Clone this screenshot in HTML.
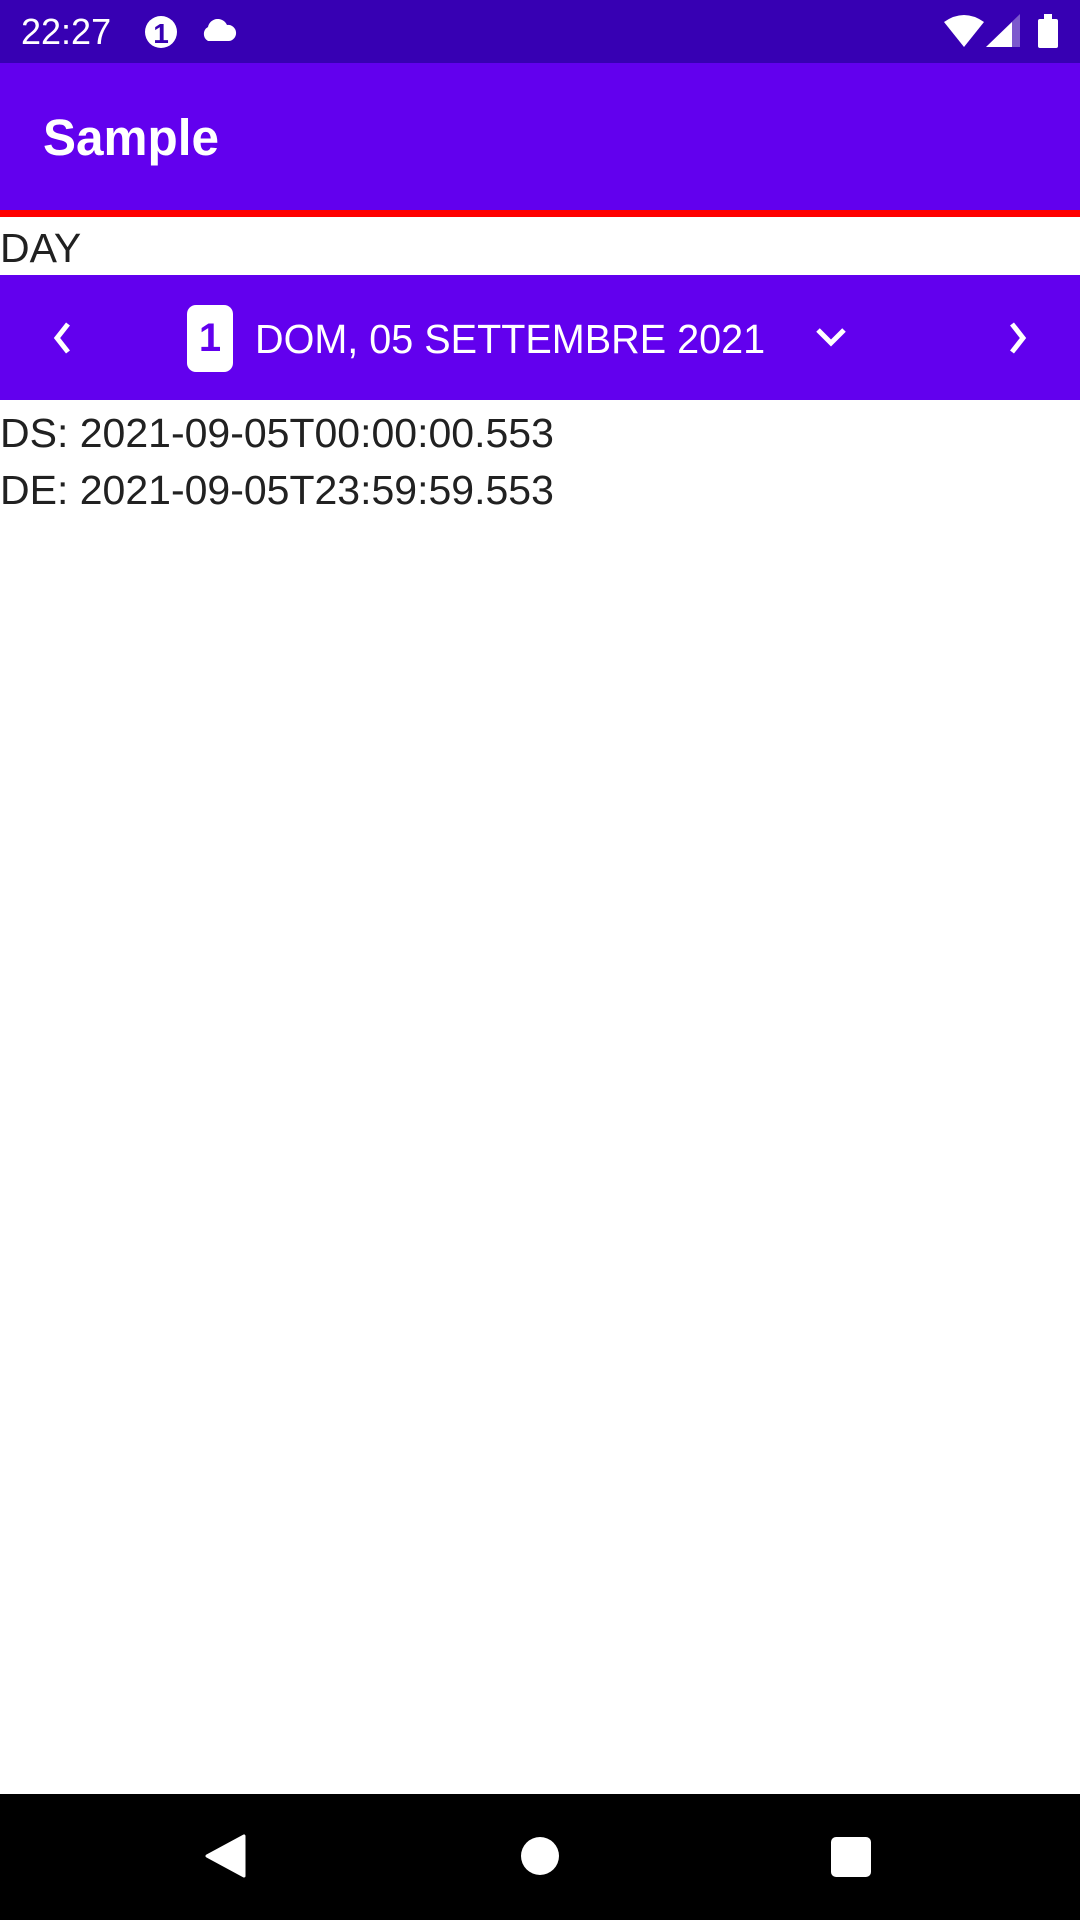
<!DOCTYPE html>
<html><head><meta charset="utf-8"><style>
*{margin:0;padding:0;box-sizing:border-box}
body{width:1080px;height:1920px;position:relative;background:#fff;font-family:"Liberation Sans",sans-serif;overflow:hidden}
.a{position:absolute}
</style></head><body>
<div class="a" style="left:0;top:0;width:1080px;height:63px;background:#3700B3"></div>
<div class="a" style="left:21px;top:10px;color:#fff;font-size:36px;line-height:44px;letter-spacing:0">22:27</div>
<svg class="a" style="left:144px;top:15px" width="34" height="34" viewBox="0 0 34 34"><circle cx="17" cy="17" r="16" fill="#fff"/><text x="17" y="28" text-anchor="middle" font-family="Liberation Sans" font-weight="bold" font-size="28" fill="#3700B3">1</text></svg>
<svg class="a" style="left:199px;top:19px" width="38" height="24" viewBox="0 0 38 24"><path d="M9 22 a8 8 0 0 1 0-14 a10 10 0 0 1 19-2 a8 8 0 0 1 2 16z" fill="#fff"/></svg>
<svg class="a" style="left:944px;top:14px" width="40" height="34" viewBox="0 0 40 34"><path d="M0 8 Q20 -6 40 8 L20 33Z" fill="#fff"/></svg>
<svg class="a" style="left:986px;top:14px" width="36" height="34" viewBox="0 0 36 34"><path d="M34 0 L34 33 L0 33Z" fill="#fff" opacity=".35"/><path d="M26 8 L26 33 L0 33Z" fill="#fff"/></svg>
<div class="a" style="left:1038px;top:19px;width:20px;height:29px;background:#fff;border-radius:2px"></div>
<div class="a" style="left:1044px;top:14px;width:8px;height:6px;background:#fff"></div>

<div class="a" style="left:0;top:63px;width:1080px;height:147px;background:#6200EE"></div>
<div class="a" style="left:43px;top:108px;color:#fff;font-size:51px;font-weight:bold;line-height:60px;transform:scaleX(0.97);transform-origin:left">Sample</div>
<div class="a" style="left:0;top:210px;width:1080px;height:7px;background:#FF0000"></div>
<div class="a" style="left:0;top:223px;color:#212121;font-size:41px;line-height:50px">DAY</div>

<div class="a" style="left:0;top:275px;width:1080px;height:125px;background:#6200EE"></div>
<svg class="a" style="left:50px;top:320px" width="26" height="36" viewBox="0 0 26 36"><path d="M18 4 L7 18 L18 32" stroke="#fff" stroke-width="5" fill="none"/></svg>
<div class="a" style="left:187px;top:305px;width:46px;height:67px;background:#fff;border-radius:9px;color:#6200EE;font-weight:bold;font-size:40px;text-align:center;line-height:67px">1</div>
<div class="a" style="left:255px;top:314px;color:#fff;font-size:41px;line-height:50px;white-space:nowrap;transform:scaleX(0.965);transform-origin:left">DOM, 05 SETTEMBRE 2021</div>
<svg class="a" style="left:814px;top:324px" width="34" height="26" viewBox="0 0 34 26"><path d="M4 6 L17 19 L30 6" stroke="#fff" stroke-width="5" fill="none"/></svg>
<svg class="a" style="left:1004px;top:320px" width="26" height="36" viewBox="0 0 26 36"><path d="M8 4 L19 18 L8 32" stroke="#fff" stroke-width="5" fill="none"/></svg>

<div class="a" style="left:0;top:405px;color:#212121;font-size:41px;line-height:57px;white-space:nowrap;transform:scaleX(1.0);transform-origin:left">DS: 2021-09-05T00:00:00.553<br>DE: 2021-09-05T23:59:59.553</div>

<div class="a" style="left:0;top:1794px;width:1080px;height:126px;background:#000"></div>
<svg class="a" style="left:204px;top:1834px" width="42" height="44" viewBox="0 0 42 44"><path d="M40 2 L40 42 L3 22Z" fill="#fff" stroke="#fff" stroke-width="3" stroke-linejoin="round"/></svg>
<div class="a" style="left:521px;top:1837px;width:38px;height:38px;border-radius:50%;background:#fff"></div>
<div class="a" style="left:831px;top:1837px;width:40px;height:40px;border-radius:5px;background:#fff"></div>
</body></html>
